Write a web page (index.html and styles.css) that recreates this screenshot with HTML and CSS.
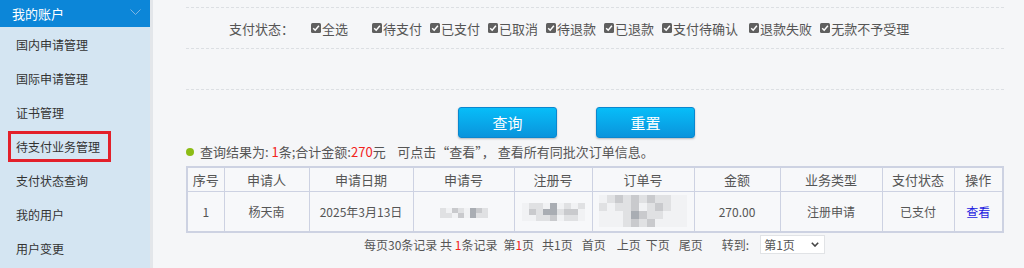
FILE: index.html
```html
<!DOCTYPE html>
<html lang="zh">
<head>
<meta charset="utf-8">
<link rel="stylesheet" href="styles.css">
</head>
<body>
<div class="page">
  <aside class="sidebar">
    <div class="side-head">
      <span>我的账户</span>
      <svg class="chev" width="11" height="6" viewBox="0 0 11 6"><polyline points="0.5,0.5 5.5,5.5 10.5,0.5" fill="none" stroke="#7fb4e2" stroke-width="1"/></svg>
    </div>
    <ul class="side-menu">
      <li>国内申请管理</li>
      <li>国际申请管理</li>
      <li>证书管理</li>
      <li><span class="hl">待支付业务管理</span></li>
      <li>支付状态查询</li>
      <li>我的用户</li>
      <li>用户变更</li>
    </ul>
  </aside>
  <main class="main">
    <div class="filter">
      <div class="frow">
        <span class="flabel">支付状态：</span>
        <span class="cb first"><svg width="10" height="10" viewBox="0 0 10 10"><rect width="10" height="10" rx="1.5" fill="#5f5f5f"/><polyline points="2.2,5.2 4.2,7.2 7.9,2.8" fill="none" stroke="#fff" stroke-width="1.5"/></svg>全选</span>
        <span class="cb"><svg width="10" height="10" viewBox="0 0 10 10"><rect width="10" height="10" rx="1.5" fill="#5f5f5f"/><polyline points="2.2,5.2 4.2,7.2 7.9,2.8" fill="none" stroke="#fff" stroke-width="1.5"/></svg>待支付</span>
        <span class="cb"><svg width="10" height="10" viewBox="0 0 10 10"><rect width="10" height="10" rx="1.5" fill="#5f5f5f"/><polyline points="2.2,5.2 4.2,7.2 7.9,2.8" fill="none" stroke="#fff" stroke-width="1.5"/></svg>已支付</span>
        <span class="cb"><svg width="10" height="10" viewBox="0 0 10 10"><rect width="10" height="10" rx="1.5" fill="#5f5f5f"/><polyline points="2.2,5.2 4.2,7.2 7.9,2.8" fill="none" stroke="#fff" stroke-width="1.5"/></svg>已取消</span>
        <span class="cb"><svg width="10" height="10" viewBox="0 0 10 10"><rect width="10" height="10" rx="1.5" fill="#5f5f5f"/><polyline points="2.2,5.2 4.2,7.2 7.9,2.8" fill="none" stroke="#fff" stroke-width="1.5"/></svg>待退款</span>
        <span class="cb"><svg width="10" height="10" viewBox="0 0 10 10"><rect width="10" height="10" rx="1.5" fill="#5f5f5f"/><polyline points="2.2,5.2 4.2,7.2 7.9,2.8" fill="none" stroke="#fff" stroke-width="1.5"/></svg>已退款</span>
        <span class="cb long"><svg width="10" height="10" viewBox="0 0 10 10"><rect width="10" height="10" rx="1.5" fill="#5f5f5f"/><polyline points="2.2,5.2 4.2,7.2 7.9,2.8" fill="none" stroke="#fff" stroke-width="1.5"/></svg>支付待确认</span>
        <span class="cb"><svg width="10" height="10" viewBox="0 0 10 10"><rect width="10" height="10" rx="1.5" fill="#5f5f5f"/><polyline points="2.2,5.2 4.2,7.2 7.9,2.8" fill="none" stroke="#fff" stroke-width="1.5"/></svg>退款失败</span>
        <span class="cb"><svg width="10" height="10" viewBox="0 0 10 10"><rect width="10" height="10" rx="1.5" fill="#5f5f5f"/><polyline points="2.2,5.2 4.2,7.2 7.9,2.8" fill="none" stroke="#fff" stroke-width="1.5"/></svg>无款不予受理</span>
      </div>
      <div class="frow empty"></div>
    </div>
    <div class="actions">
      <button class="btn">查询</button>
      <button class="btn">重置</button>
    </div>
    <p class="result"><span class="dot"></span>查询结果为: <em>1</em>条;合计金额:<em>270</em>元&nbsp;&nbsp;&nbsp;&nbsp;可点击“查看”，&nbsp;查看所有同批次订单信息。</p>
    <table class="grid">
      <colgroup>
        <col class="w1"><col class="w2"><col class="w3"><col class="w4"><col class="w5">
        <col class="w6"><col class="w7"><col class="w8"><col class="w9"><col class="w10">
      </colgroup>
      <thead>
        <tr><th>序号</th><th>申请人</th><th>申请日期</th><th>申请号</th><th>注册号</th><th>订单号</th><th>金额</th><th>业务类型</th><th>支付状态</th><th>操作</th></tr>
      </thead>
      <tbody>
        <tr>
          <td>1</td>
          <td>杨天南</td>
          <td>2025年3月13日</td>
          <td><div class="mosaic m-app">
            <div class="mrow"><i class="g1"></i><i class="g0"></i><i class="g2"></i><i class="g1"></i><i class="g0"></i><i class="g3"></i><i class="g2"></i><i class="g1"></i></div>
            <div class="mrow"><i class="g1"></i><i class="g1"></i><i class="g0"></i><i class="g2"></i><i class="g0"></i><i class="g3"></i><i class="g1"></i><i class="g1"></i></div>
          </div></td>
          <td><div class="mosaic m-reg">
            <div class="mrow"><i class="g0"></i><i class="g1"></i><i class="g1"></i><i class="g0"></i><i class="g3"></i><i class="g0"></i><i class="g1"></i><i class="g0"></i><i class="g1"></i></div>
            <div class="mrow"><i class="g0"></i><i class="g2"></i><i class="g1"></i><i class="g3"></i><i class="g3"></i><i class="g1"></i><i class="g2"></i><i class="g2"></i><i class="g0"></i></div>
            <div class="mrow"><i class="g0"></i><i class="g0"></i><i class="g1"></i><i class="g1"></i><i class="g2"></i><i class="g0"></i><i class="g1"></i><i class="g1"></i><i class="g0"></i></div>
          </div></td>
          <td><div class="mosaic m-ord">
            <div class="mrow"><i class="g0"></i><i class="g1"></i><i class="g2"></i><i class="g1"></i><i class="g2"></i><i class="g1"></i><i class="g2"></i><i class="g1"></i><i class="g1"></i><i class="g0"></i><i class="g0"></i></div>
            <div class="mrow"><i class="g1"></i><i class="g0"></i><i class="g1"></i><i class="g1"></i><i class="g2"></i><i class="g0"></i><i class="g1"></i><i class="g2"></i><i class="g1"></i><i class="g0"></i><i class="g0"></i></div>
            <div class="mrow"><i class="g0"></i><i class="g0"></i><i class="g0"></i><i class="g1"></i><i class="g3"></i><i class="g2"></i><i class="g1"></i><i class="g1"></i><i class="g0"></i><i class="g0"></i><i class="g0"></i></div>
            <div class="mrow"><i class="g0"></i><i class="g0"></i><i class="g0"></i><i class="g1"></i><i class="g2"></i><i class="g1"></i><i class="g2"></i><i class="g0"></i><i class="g0"></i><i class="g0"></i><i class="g0"></i></div>
          </div></td>
          <td>270.00</td>
          <td>注册申请</td>
          <td>已支付</td>
          <td><a class="link">查看</a></td>
        </tr>
      </tbody>
    </table>
    <div class="pager">
      <span>每页30条记录 共 <em>1</em>条记录</span>
      <span class="pg p1">第<em>1</em>页</span>
      <span class="pg p2">共1页</span>
      <span class="pg p3">首页</span>
      <span class="pg p4">上页</span>
      <span class="pg p5">下页</span>
      <span class="pg p6">尾页</span>
      <span class="goto">转到:</span>
      <span class="select">第1页<svg width="8" height="5" viewBox="0 0 8 5"><polyline points="0.8,0.8 4,4 7.2,0.8" fill="none" stroke="#444" stroke-width="1.6"/></svg></span>
    </div>
  </main>
</div>
</body>
</html>
```

FILE: styles.css
```css
* { box-sizing: border-box; }
html, body { margin: 0; padding: 0; }
body {
  font-family: "Noto Sans CJK SC", "Microsoft YaHei", sans-serif;
  color: #555;
  background: #f5f6f8;
  width: 1024px;
  height: 268px;
  overflow: hidden;
}
.page { display: flex; height: 268px; }

.sidebar {
  width: 153px;
  flex: none;
  background: #d4e5f2;
  border-right: 3px solid #e3e6ea;
}
.side-head {
  height: 27px;
  background: #0c86d8;
  color: #fff;
  font-size: 13px;
  display: flex;
  align-items: center;
  justify-content: space-between;
  padding: 0 9px 0 12px;
}
.side-head .chev { margin-top: -4px; }
.side-menu { list-style: none; margin: 0; padding: 0; }
.side-menu li {
  height: 34px;
  display: flex;
  align-items: center;
  padding-left: 16px;
  font-size: 12px;
  color: #333;
}
.hl {
  display: inline-block;
  margin-left: -8px;
  padding: 4px 8px 4px 5px;
  border: 3px solid #e3202a;
  line-height: 17px;
}

.main {
  flex: 1;
  padding: 7px 21px 0 33px;
  font-size: 13px;
}
.filter { border-top: 1px dashed #dcdfe3; }
.frow {
  height: 41px;
  border-bottom: 1px dashed #dcdfe3;
  display: flex;
  align-items: center;
  padding-left: 43px;
  font-size: 13px;
  color: #555;
}
.flabel { width: 82px; }
.cb { display: inline-flex; align-items: center; margin-right: 8px; }
.cb svg { margin-right: 1px; }
.cb.first { margin-right: 24px; }
.cb.long { margin-right: 11px; }

.actions {
  display: flex;
  gap: 39px;
  padding: 17px 0 0 272px;
}
.btn {
  width: 99px;
  height: 31px;
  border: 1px solid #0a87cf;
  border-radius: 3px;
  background: linear-gradient(#07bdf8, #0a94dc);
  color: #fff;
  font-family: inherit;
  font-size: 15px;
  box-shadow: 0 1px 2px rgba(0,0,0,0.25);
  padding: 0;
}

.result {
  margin: 5px 0 0 0;
  height: 18px;
  line-height: 18px;
  display: flex;
  align-items: center;
  font-size: 13px;
  color: #555;
  white-space: pre;
}
.result em, .pager em { font-style: normal; color: #f2231c; }
.dot {
  width: 8px; height: 8px;
  border-radius: 50%;
  background: #8cbc15;
  margin: 0 6px 0 0;
}

.grid {
  margin-top: 5px;
  border-collapse: collapse;
  table-layout: fixed;
  width: 816px;
  border: 2px solid #cdd2e2;
  background: #f7f8fa;
}
.grid th, .grid td {
  border: 1px solid #cdd2e2;
  text-align: center;
  padding: 0;
  overflow: hidden;
  white-space: nowrap;
}
.grid th { height: 24px; font-weight: normal; font-size: 13px; color: #555; }
.grid td { height: 41px; font-size: 12px; color: #555; }
.w1 { width: 37px; } .w2 { width: 85px; } .w3 { width: 104px; } .w4 { width: 101px; }
.w5 { width: 78px; } .w6 { width: 102px; } .w7 { width: 86px; } .w8 { width: 102px; }
.w9 { width: 72px; } .w10 { width: 49px; }
.link { color: #1d1be0; cursor: pointer; }

.mosaic { display: inline-flex; flex-direction: column; vertical-align: middle; }
.mrow { display: flex; }
.mosaic i { display: block; width: 6px; height: 5px; }
.m-reg i { width: 7px; height: 6px; }
.m-ord i { width: 8px; height: 8px; }
.g0 { background: #f1f2f4; }
.g1 { background: #e0e1e3; }
.g2 { background: #c9cacd; }
.g3 { background: #a9adb3; }

.pager {
  display: flex;
  align-items: center;
  padding: 1px 0 0 178px;
  height: 21px;
  font-size: 12px;
  color: #555;
}
.p1 { margin-left: 6px; }
.p2 { margin-left: 8px; }
.p3 { margin-left: 9px; }
.p4 { margin-left: 11px; }
.p5 { margin-left: 5px; }
.p6 { margin-left: 9px; }
.goto { margin-left: 19px; }
.select {
  margin-left: 11px;
  width: 65px;
  height: 19px;
  background: #fff;
  border: 1px solid #e1e3e6;
  display: flex;
  align-items: center;
  justify-content: space-between;
  padding: 0 5px 0 3px;
}
```
